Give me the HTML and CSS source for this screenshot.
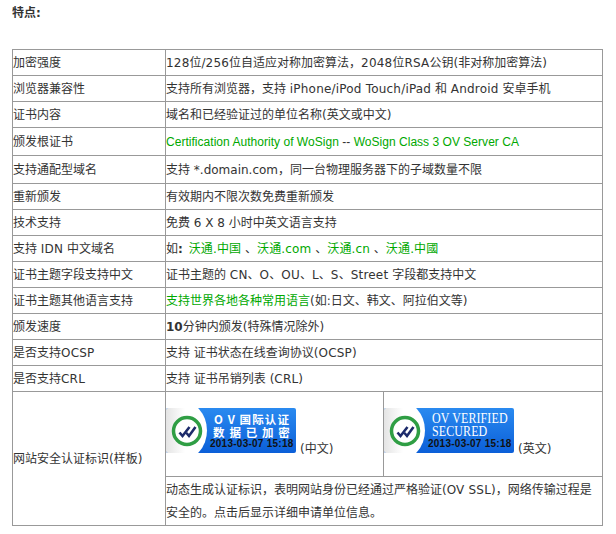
FILE: index.html
```html
<!DOCTYPE html>
<html lang="zh">
<head>
<meta charset="utf-8">
<title>特点</title>
<link rel="stylesheet" href="styles.css">
</head>
<body>
<p class="heading">特点:</p>
<table class="spec">
<colgroup><col class="c1"><col class="c2"><col class="c3"></colgroup>
<tr class="r26"><td>加密强度</td><td colspan="2"><span class="v">128</span>位/<span class="v">256</span>位自适应对称加密算法，<span class="v">2048</span>位<span class="v">RSA</span>公钥(非对称加密算法)</td></tr>
<tr class="r26"><td>浏览器兼容性</td><td colspan="2">支持所有浏览器，支持 <span class="v">iPhone/iPod Touch/iPad</span> 和 <span class="v">Android</span> 安卓手机</td></tr>
<tr class="r26"><td>证书内容</td><td colspan="2">域名和已经验证过的单位名称(英文或中文)</td></tr>
<tr class="r28"><td>颁发根证书</td><td colspan="2" class="latin-green"><span class="green">Certification Authority of WoSign</span> -- <span class="green">WoSign Class 3 OV Server CA</span></td></tr>
<tr class="r28"><td>支持通配型域名</td><td colspan="2">支持 *.domain.com，同一台物理服务器下的子域数量不限</td></tr>
<tr class="r26"><td>重新颁发</td><td colspan="2">有效期内不限次数免费重新颁发</td></tr>
<tr class="r26"><td>技术支持</td><td colspan="2">免费 6 X 8 小时中英文语言支持</td></tr>
<tr class="r26"><td>支持 <span class="v">IDN</span> 中文域名</td><td colspan="2">如<b class="colon">:</b> <span class="green idn">沃通.中国</span> 、<span class="green idn">沃通.com</span> 、<span class="green idn">沃通.cn</span> 、<span class="green idn">沃通.中國</span></td></tr>
<tr class="r26"><td>证书主题字段支持中文</td><td colspan="2">证书主题的 <span class="v">CN</span>、<span class="v">O</span>、<span class="v">OU</span>、<span class="v">L</span>、<span class="v">S</span>、<span class="v">Street</span> 字段都支持中文</td></tr>
<tr class="r26"><td>证书主题其他语言支持</td><td colspan="2"><span class="green">支持世界各地各种常用语言</span>(如:日文、韩文、阿拉伯文等)</td></tr>
<tr class="r26"><td>颁发速度</td><td colspan="2"><b>10</b>分钟内颁发(特殊情况除外)</td></tr>
<tr class="r26"><td>是否支持<span class="v">OCSP</span></td><td colspan="2">支持 证书状态在线查询协议(<span class="v">OCSP</span>)</td></tr>
<tr class="r26"><td>是否支持<span class="v">CRL</span></td><td colspan="2">支持 证书吊销列表 (<span class="v">CRL</span>)</td></tr>
<tr class="r85">
<td rowspan="2">网站安全认证标识(样板)</td>
<td class="seal-cell">
<span class="seal">
<svg class="seal-icon" viewBox="0 0 44 45" width="44" height="45" aria-hidden="true"><circle cx="21" cy="23" r="13.5" fill="#fff" stroke="#2f9e44" stroke-width="3.5"/><path d="M13.500 24.500l3 3.500 7-9 M20.500 25l2.500 3 6.500-9" fill="none" stroke="#1d2b6b" stroke-width="2.6"/></svg>
<span class="seal-text cn"><span class="l1">O V 国际认证</span><span class="l2">数 据 已 加 密</span></span>
<span class="seal-date">2013-03-07 15:18</span>
</span><span class="seal-label">(中文)</span>
</td>
<td class="seal-cell">
<span class="seal">
<svg class="seal-icon" viewBox="0 0 44 45" width="44" height="45" aria-hidden="true"><circle cx="21" cy="23" r="13.5" fill="#fff" stroke="#2f9e44" stroke-width="3.5"/><path d="M13.500 24.500l3 3.500 7-9 M20.500 25l2.500 3 6.500-9" fill="none" stroke="#1d2b6b" stroke-width="2.6"/></svg>
<span class="seal-text en"><span class="l1">OV VERIFIED</span><span class="l2">SECURED</span></span>
<span class="seal-date">2013-03-07 15:18</span>
</span><span class="seal-label">(英文)</span>
</td>
</tr>
<tr class="r49"><td colspan="2" class="note">动态生成认证标识，表明网站身份已经通过严格验证(<span class="v">OV SSL</span>)，网络传输过程是安全的。点击后显示详细申请单位信息。</td></tr>
</table>
</body>
</html>
```
FILE: styles.css
```css
html, body { margin: 0; padding: 0; background: #fff; }
body {
  width: 616px;
  height: 534px;
  overflow: hidden;
  font-family: "DejaVu Sans", "Noto Sans CJK SC", sans-serif;
  font-size: 12px;
  color: #333;
}
.heading {
  margin: 0;
  padding: 6px 0 0 12px;
  height: 49px;
  box-sizing: border-box;
  line-height: 14px;
  font-weight: bold;
}
.spec {
  margin-left: 12px;
  border-collapse: collapse;
  table-layout: fixed;
  width: 590px;
}
.c1 { width: 153px; }
.c2 { width: 218px; }
.c3 { width: 219px; }
.spec td {
  border: 1px solid #999;
  padding: 0;
  line-height: 18px;
  vertical-align: middle;
}
.r26 { height: 26px; }
.r28 { height: 28px; }
.r85 { height: 85px; }
.r49 { height: 49px; }
.v { letter-spacing: 0.2px; }
.colon { margin-right: 2px; }
.green { color: #00a800; }
.idn { letter-spacing: 0.15px; }
.latin-green {
  font-family: "Liberation Sans", "Noto Sans CJK SC", sans-serif;
  letter-spacing: 0.03px;
}
.spec td.note { line-height: 23px; padding: 2px 9px 0 0; }
.spec td.seal-cell { vertical-align: top; padding-top: 16px; white-space: nowrap; }
.seal {
  display: inline-block;
  position: relative;
  width: 130px;
  height: 45px;
  border-radius: 2px;
  background: linear-gradient(#2a8af0, #0b5fd8);
  overflow: hidden;
}
.seal::before {
  content: "";
  position: absolute;
  left: -14px;
  top: -8px;
  width: 55px;
  height: 61px;
  border-radius: 50%;
  background: linear-gradient(90deg, #d0d0d0, #fff 60%);
}
.seal-icon { position: absolute; left: 0; top: 0; }
.seal-text {
  position: absolute;
  left: 45px;
  top: 5px;
  width: 82px;
  color: #fff;
}
.seal-text .l1, .seal-text .l2 { display: block; white-space: nowrap; }
.seal-text.cn {
  font-family: "Noto Sans CJK SC", sans-serif;
  font-size: 11.5px;
  line-height: 13px;
  letter-spacing: 1.1px;
  text-align: center;
  font-weight: bold;
}
.seal-text.en {
  font-family: "Liberation Serif", serif;
  font-size: 12px;
  line-height: 11px;
  left: 48px;
  top: 5px;
  letter-spacing: 0.1px;
  transform: scaleY(1.15);
  transform-origin: top left;
}
.seal-date {
  position: absolute;
  left: 44px;
  top: 31px;
  font: bold 10px/10px "Liberation Sans", sans-serif;
  letter-spacing: 0.25px;
  color: #111;
  white-space: nowrap;
}
.seal-label { margin-left: 4px; }
```
